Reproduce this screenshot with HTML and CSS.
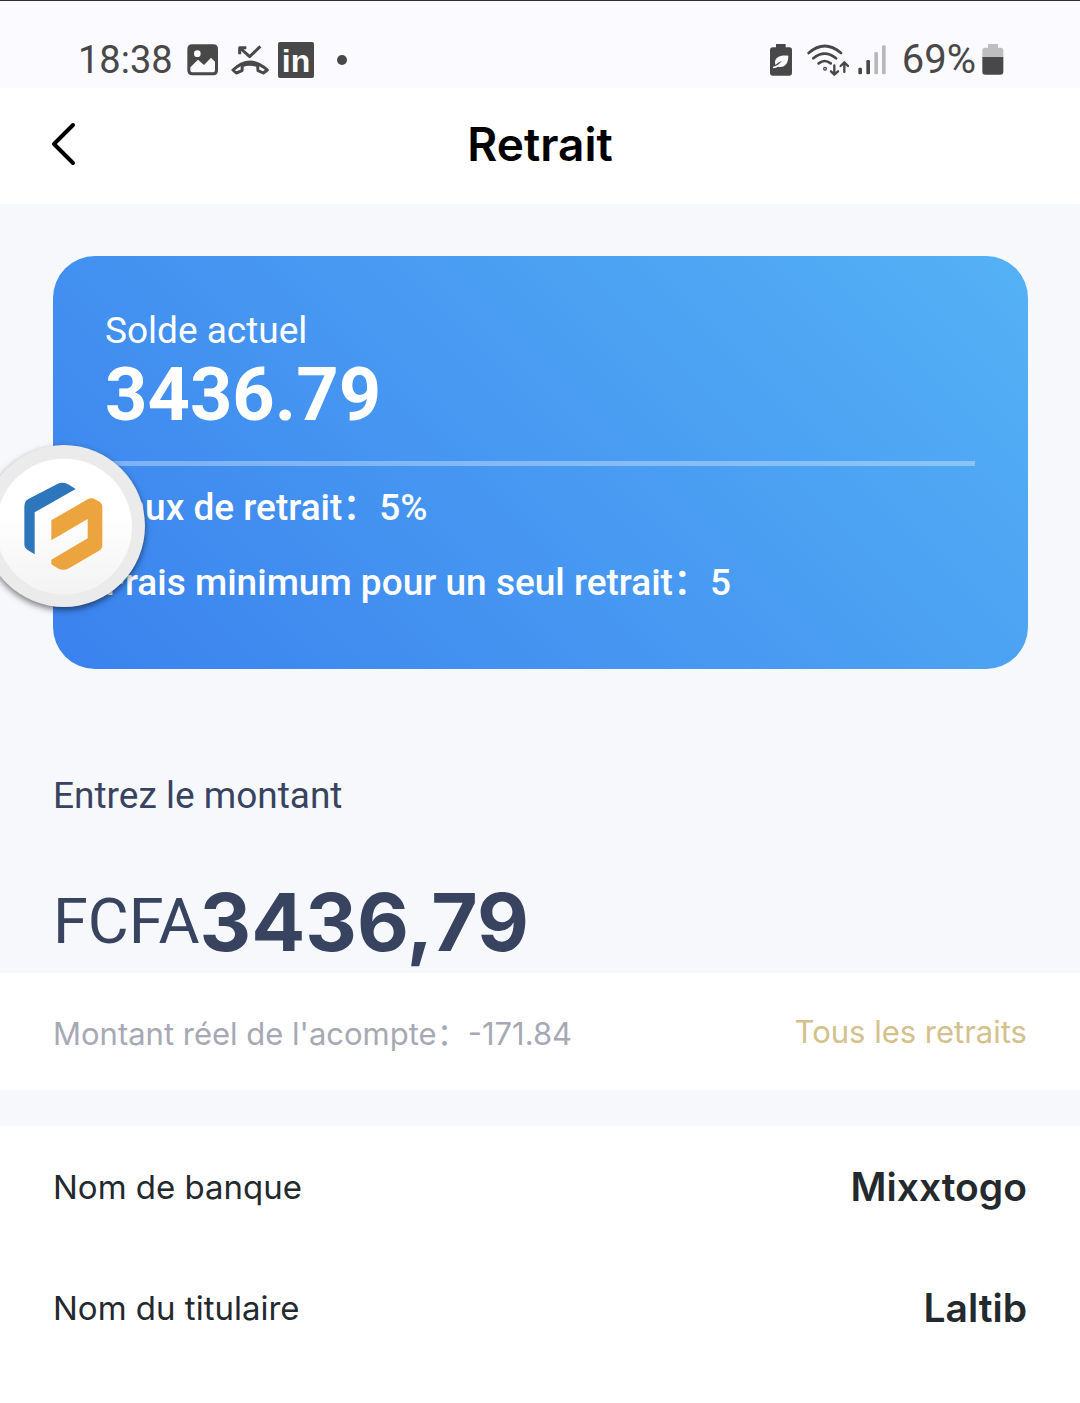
FILE: index.html
```html
<!DOCTYPE html>
<html lang="fr">
<head>
    <meta charset="UTF-8">
    <meta name="viewport" content="width=device-width, initial-scale=1.0">
    <title>Retrait</title>
    <link rel="stylesheet" href="styles.css">
</head>
<body>
    <div class="status-bar">
        <div class="status-left">
            <span class="time">18:38</span>
            <svg class="icon-photo" width="32" height="32" viewBox="380 134 96 96">
                <path fill="#484848" fill-rule="evenodd" d="M396 135H459Q473 135 473 150V213Q473 228 459 228H396Q381 228 381 213V150Q381 135 396 135ZM390 204V212Q390 219 398 219H457Q464 219 464 211V187L452 175L431 197L413 181ZM411 153A10 10 0 1 0 411 173A10 10 0 1 0 411 153Z"/>
            </svg>
            <svg class="icon-call" width="38" height="32" viewBox="511 132 114 96" fill="none" stroke="#484848" stroke-width="9" stroke-linejoin="round">
                <path d="M537 163V143H557M538 144L567 170L599 139"/>
                <path d="M517 210Q568 163 620 210L608 219L592 212L591 197Q568 188 545 197L544 212L527 219Z"/>
            </svg>
            <svg class="icon-in" width="36" height="36" viewBox="0 0 36 36">
                <rect width="36" height="36" rx="2" fill="#484848"/>
                <text x="18" y="30" text-anchor="middle">in</text>
            </svg>
            <span class="dot"></span>
        </div>
        <div class="status-right">
            <svg width="22" height="32" viewBox="60 131 66 96">
                <path fill="#484848" d="M78 131H107V141H118Q126 141 126 149V217Q126 226 117 226H69Q60 226 60 217V149Q60 141 69 141H78Z"/>
                <path fill="#fafaff" d="M76 194C71 171 88 164 115 166C115 190 104 203 84 199Q77 204 69 204V199Q85 196 96 181Q83 187 76 194Z"/>
            </svg>
            <svg class="icon-wifi" width="42" height="32" viewBox="171 130 126 96" fill="none" stroke="#484848" stroke-width="8" stroke-linecap="round" stroke-linejoin="round">
                <path d="M176 157Q224 115 273 157M190 173Q224 145 258 173M206 188Q224 174 242 188"/>
                <circle cx="225" cy="204" r="2"/>
                <path stroke-width="7" d="M253 194V221M243 212L253 222L264 212M283 214V187M272 196L283 185L294 196"/>
            </svg>
            <svg class="icon-signal" width="28" height="30" viewBox="324 134 84 90" fill="#484848">
                <rect x="325" y="202" width="11" height="20" rx="4"/>
                <rect x="349" y="179" width="11" height="43" rx="4"/>
                <rect x="373" y="155" width="11" height="67" rx="4" fill="#b8b8bb"/>
                <rect x="396" y="135" width="11" height="87" rx="4" fill="#b8b8bb"/>
            </svg>
            <span class="percent">69%</span>
            <svg class="icon-battery" width="22" height="31" viewBox="698 132 66 93">
                <path fill="#bebec1" d="M716 132H746V143H754Q762 143 762 151V171H699V151Q699 143 707 143H716Z"/>
                <path fill="#484848" d="M699 171H762V215Q762 224 753 224H708Q699 224 699 215Z"/>
            </svg>
        </div>
    </div>

    <header class="header">
        <button class="back" type="button" aria-label="Retour">
            <svg width="28" height="44" viewBox="0 0 28 44" fill="none" stroke="#000" stroke-width="4" stroke-linecap="round" stroke-linejoin="round">
                <path d="M25 3L6 22L25 41"/>
            </svg>
        </button>
        <h1>Retrait</h1>
    </header>

    <main>
        <section class="card">
            <div class="card-label">Solde actuel</div>
            <div class="balance">3436.79</div>
            <div class="divider"></div>
            <p>Taux de retrait：5%</p>
            <p>Frais minimum pour un seul retrait：5</p>
        </section>

        <section class="amount">
            <label for="montant">Entrez le montant</label>
            <div class="amount-row">
                <span class="currency">FCFA</span>
                <input id="montant" type="text" inputmode="decimal" value="3436,79">
            </div>
        </section>

        <section class="summary">
            <span>Montant réel de l'acompte：-171.84</span>
            <button class="all" type="button">Tous les retraits</button>
        </section>

        <dl class="details">
            <div class="row">
                <dt>Nom de banque</dt>
                <dd>Mixxtogo</dd>
            </div>
            <div class="row">
                <dt>Nom du titulaire</dt>
                <dd>Laltib</dd>
            </div>
        </dl>
    </main>

    <!-- floating shortcut over the card -->
    <button class="bubble" type="button" aria-label="Menu">
        <svg width="162" height="162" viewBox="-51 45 486 486">
            <defs>
                <linearGradient id="disc" x1="0" y1="0" x2="0" y2="1">
                    <stop offset="0.4" stop-color="#fff"/>
                    <stop offset="1" stop-color="#f3f3f3"/>
                </linearGradient>
            </defs>
            <circle cx="192" cy="290" r="204" fill="url(#disc)"/>
            <path fill="#2e76bb" d="M73 230Q73 214 85 207L172 162Q190 154 207 164L227 177L104 247V373L84 361Q73 354 73 342Z"/>
            <path fill="#eca53e" d="M154 271L263 208Q273 202 283 207L299 215Q307 220 307 231V344Q307 356 297 362L207 415Q190 424 173 415L154 403V389L263 325V267L154 331Z"/>
        </svg>
    </button>
</body>
</html>
```
FILE: styles.css
```css
* {
    box-sizing: border-box;
}

body {
    margin: 0;
    min-height: 100vh;
    background-color: #fff;
    color: #24292e;
    font-family: Inter, "Noto Sans CJK SC", sans-serif;
    position: relative;
    overflow-x: hidden;
}

button {
    border: none;
    padding: 0;
    background: none;
    font-family: inherit;
    cursor: pointer;
}

svg {
    display: block;
}

.status-bar {
    display: flex;
    justify-content: space-between;
    height: 88px;
    padding: 30px 76px 0 78px;
    border-top: 1px solid #302d38;
    background-color: #fafaff;
    color: #484848;
    font-family: Roboto, sans-serif;
    font-size: 40px;
}

.status-left,
.status-right {
    display: flex;
    align-items: center;
}

.time {
    font-size: 38px;
}

.icon-photo {
    margin-left: 14px;
}

.icon-call {
    margin-left: 12px;
}

.icon-in {
    margin-left: 9px;
    overflow: visible;
}

.icon-in text {
    fill: #fafaff;
    font-family: "Liberation Sans", sans-serif;
    font-size: 32px;
    font-weight: 700;
}

.dot {
    width: 10px;
    height: 10px;
    margin-left: 23px;
    border-radius: 50%;
    background-color: #484848;
}

.icon-wifi {
    margin-left: 15px;
}

.icon-signal {
    margin-left: 9px;
}

.percent {
    margin-left: 16px;
}

.icon-battery {
    margin-left: 6px;
}

.header {
    display: grid;
    grid-template-columns: 1fr auto 1fr;
    align-items: center;
    height: 116px;
    padding: 0 48px 4px;
}

.back {
    justify-self: start;
}

.header h1 {
    margin: 0;
    color: #000;
    font-size: 46px;
    font-weight: 600;
}

main {
    padding-top: 52px;
    background-color: #f7f8fc;
}

.card {
    margin: 0 52px 0 53px;
    padding: 52px 53px 49px 52px;
    border-radius: 42px;
    background: linear-gradient(45deg, #3a82ee, #55b1f5);
    color: #fff;
    font-family: Roboto, "Noto Sans CJK SC", sans-serif;
    font-size: 37px;
}

.card-label {
    line-height: 45px;
}

.balance {
    font-size: 74px;
    font-weight: 700;
    line-height: 84px;
}

.divider {
    height: 5px;
    margin: 24px 0 4px;
    background-color: rgba(255, 255, 255, 0.33);
}

.card p {
    margin: 0;
    font-weight: 500;
    line-height: 75px;
}

.amount {
    padding: 104px 53px 2px;
    color: #38435f;
    font-family: Roboto, sans-serif;
}

.amount label {
    display: block;
    font-size: 37px;
    line-height: 45px;
}

.amount-row {
    display: flex;
    align-items: center;
    height: 100px;
    margin-top: 53px;
}

.currency {
    font-size: 63px;
}

.amount input {
    flex: 1;
    min-width: 0;
    padding: 0;
    border: none;
    outline: none;
    background: none;
    color: inherit;
    font-family: Inter, sans-serif;
    font-size: 80px;
    font-weight: 700;
}

.summary {
    display: flex;
    justify-content: space-between;
    align-items: center;
    height: 117px;
    padding: 0 53px;
    background-color: #fff;
    color: #a6a9b4;
    font-size: 31px;
}

.all {
    color: #d3c18d;
    font-size: 31px;
}

.details {
    margin: 0;
    border-top: 36px solid #f7f8fc;
    background-color: #fff;
}

.row {
    display: flex;
    justify-content: space-between;
    align-items: center;
    height: 121px;
    padding: 0 53px;
    font-size: 33px;
}

.row dd {
    margin: 0;
    font-size: 39px;
    font-weight: 600;
}

.bubble {
    position: absolute;
    top: 445px;
    left: -17px;
    border-radius: 50%;
    background-color: #ebebeb;
    box-shadow: 0 3px 6px rgba(0, 0, 0, 0.5);
}
```
